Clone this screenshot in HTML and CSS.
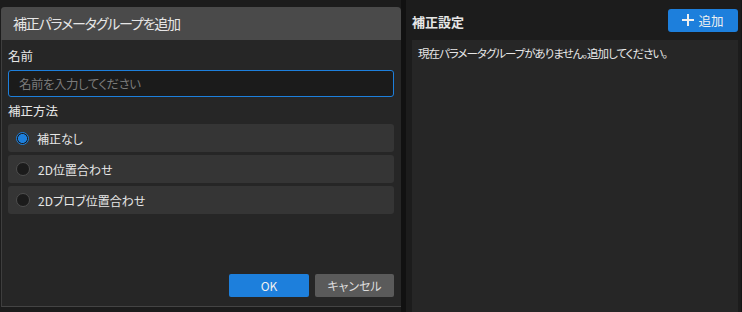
FILE: index.html
```html
<!DOCTYPE html>
<html>
<head>
    <meta charset='utf-8'>
    <title>補正設定</title>
    <link rel="stylesheet" href="styles.css">
</head>

<body>
    <div class="left">
        <div class="dlg">
            <div class="dlg-title">補正パラメータグループを追加</div>
            <div class="dlg-body">
                <div class="lbl">名前</div>
                <div class="inp">名前を入力してください</div>
                <div class="lbl lbl2">補正方法</div>
                <div class="opts">
                    <div class="opt"><span class="rad on"></span>補正なし</div>
                    <div class="opt"><span class="rad"></span>2D位置合わせ</div>
                    <div class="opt"><span class="rad"></span>2Dブロブ位置合わせ</div>
                </div>
                <div class="acts">
                    <button class="btn ok">OK</button>
                    <button class="btn cancel">キャンセル</button>
                </div>
            </div>
        </div>
    </div>
    <div class="sep"></div>
    <div class="right">
        <div class="head">
            <div class="h-title">補正設定</div>
            <button class="btn add"><svg viewBox="0 0 12 12" width="12" height="12"><path d="M6 0v12M0 6h12" stroke="currentColor" stroke-width="2"/></svg>追加</button>
        </div>
        <div class="content">現在パラメータグループがありません。追加してください。</div>
    </div>
</body>

</html>
```

FILE: styles.css
```css
html, body {
    height: 100%;
}
body {
    margin: 0;
    display: flex;
    background: #1c1c1c;
    color: #e6e6e6;
    font-family: "Noto Sans CJK JP", "Noto Sans", sans-serif;
    font-feature-settings: "palt";
    font-size: 12px;
    overflow: hidden;
}

.left {
    width: 401px;
    padding: 7px 0 5px 1px;
    box-sizing: border-box;
    display: flex;
}

.dlg {
    flex: 1;
    display: flex;
    flex-direction: column;
    background: #262626;
    border-left: 1px solid #3e3e3e;
    border-bottom: 1px solid #444;
    border-radius: 4px 4px 0 0;
}

.dlg-title {
    height: 33px;
    line-height: 33px;
    background: #4a4a4a;
    padding-left: 12px;
    font-size: 14px;
    letter-spacing: -1.2px;
    border-radius: 4px 4px 0 0;
    margin-left: -1px;
}

.dlg-body {
    flex: 1;
    display: flex;
    flex-direction: column;
    padding: 7px 7px 9px 6px;
}

.lbl {
    font-size: 12.5px;
    line-height: 18px;
    margin-bottom: 5px;
}
.lbl2 { margin: 5px 0 4px; }

.inp {
    height: 27px;
    box-sizing: border-box;
    border: 1px solid #1d7fdc;
    border-radius: 3px;
    background: #1b1b1b;
    color: #7a7a7a;
    padding-left: 10px;
    line-height: 25px;
    font-size: 12.5px;
    letter-spacing: -0.5px;
}

.opts {
    display: flex;
    flex-direction: column;
    gap: 3px;
}

.opt {
    height: 28px;
    display: flex;
    align-items: center;
    gap: 8px;
    padding-left: 8px;
    background: #353535;
    border-radius: 3px;
    font-size: 12px;
}

.rad {
    width: 12px;
    height: 12px;
    border: 1px solid #4e4e4e;
    border-radius: 50%;
    background: #1b1b1b;
}
.rad.on {
    border: 1.5px solid #1d7fdc;
    background: radial-gradient(circle, #1d7fdc 0 4.2px, #1b1b1b 4.8px);
    width: 11px;
    height: 11px;
}

.acts {
    margin-top: auto;
    display: flex;
    justify-content: flex-end;
    gap: 6px;
}

.btn {
    border: none;
    border-radius: 2px;
    color: #f0f0f0;
    font-family: inherit;
    font-feature-settings: "palt";
    font-size: 12px;
    height: 23px;
    padding: 0;
    cursor: pointer;
}
.ok { width: 80px; background: #1d7fdc; }
.cancel { width: 79px; background: #5a5a5a; color: #ddd; }

.sep {
    width: 5px;
    background: #111;
}

.right {
    flex: 1;
    display: flex;
    flex-direction: column;
    padding: 0 3px 0 6px;
    border-right: 1px solid #151515;
}

.head {
    height: 40px;
    display: flex;
    align-items: center;
    justify-content: space-between;
    padding-top: 3px;
    box-sizing: border-box;
}

.h-title {
    font-size: 13px;
    font-weight: bold;
}

.add {
    width: 70px;
    height: 23px;
    margin-bottom: 3px;
    background: #1d7fdc;
    border-radius: 3px;
    display: flex;
    align-items: center;
    justify-content: center;
    gap: 4px;
    font-size: 12.5px;
}

.content {
    flex: 1;
    background: #262626;
    padding: 5px 6px;
    font-size: 11.5px;
    letter-spacing: -1px;
    line-height: 17px;
}
```
